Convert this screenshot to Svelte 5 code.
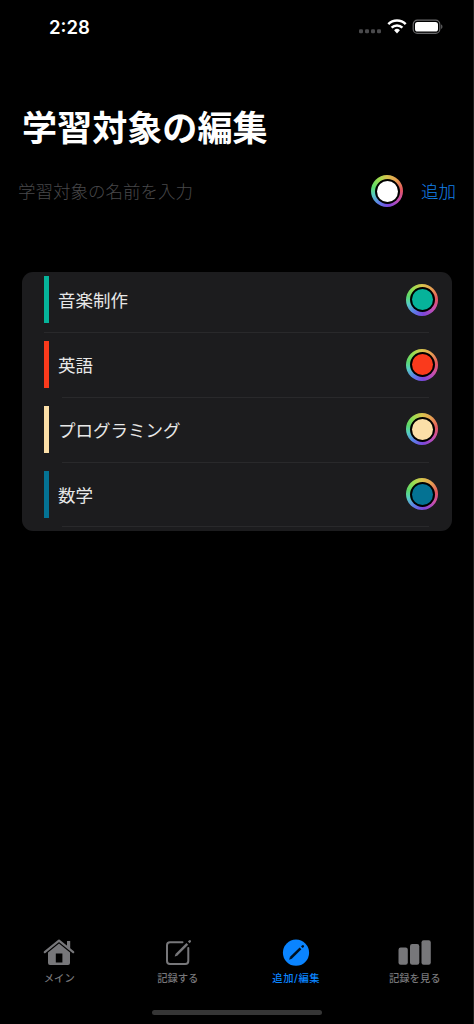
<script lang="ts">
    type Subject = { name: string; color: string };

    const subjects: Subject[] = [
        { name: '音楽制作', color: '#06b39a' },
        { name: '英語', color: '#fa3a1c' },
        { name: 'プログラミング', color: '#fbdfa8' },
        { name: '数学', color: '#047293' },
    ];

    const tabs = [
        { id: 'main', label: 'メイン' },
        { id: 'record', label: '記録する' },
        { id: 'edit', label: '追加/編集' },
        { id: 'stats', label: '記録を見る' },
    ];

    let active = $state('edit');
</script>

{#snippet colorWell(color: string)}
    <button type="button" class="well" aria-label="color">
        <span class="well-gap"><span class="well-fill" style="background: {color}"></span></span>
    </button>
{/snippet}

<div class="screen">
    <header class="status">
        <span class="time">2:28</span>
        <svg class="status-icons" width="86" height="18" viewBox="0 0 86 18">
            <g fill="#4a4a4c">
                <rect x="1" y="11.3" width="4" height="4" rx="1.2" />
                <rect x="7" y="11.3" width="4" height="4" rx="1.2" />
                <rect x="13" y="11.3" width="4" height="4" rx="1.2" />
                <rect x="19" y="11.3" width="4" height="4" rx="1.2" />
            </g>
            <g fill="none" stroke="#fff" stroke-width="2.5">
                <path d="M30.3 6.2a12.2 12.2 0 0 1 17.4 0" />
                <path d="M33.6 9.7a7.6 7.6 0 0 1 10.8 0" />
            </g>
            <path d="M36.1 12.2a4.2 4.2 0 0 1 5.8 0L39 15.4z" fill="#fff" />
            <rect x="55.2" y="2.2" width="26.6" height="13.2" rx="4.2" fill="none" stroke="#69696b" stroke-width="1.2" />
            <rect x="57" y="4" width="23" height="9.6" rx="2.6" fill="#fff" />
            <path d="M83.2 6.5v4.4c1.6-.6 1.6-3.8 0-4.4z" fill="#69696b" />
        </svg>
    </header>

    <h1>学習対象の編集</h1>

    <div class="add-row">
        <input type="text" placeholder="学習対象の名前を入力" />
        {@render colorWell('#ffffff')}
        <button type="button" class="add">追加</button>
    </div>

    <ul class="list">
        {#each subjects as subject, i}
            <li class:inset={i > 0}>
                <span class="bar" style="background: {subject.color}"></span>
                <span class="name">{subject.name}</span>
                {@render colorWell(subject.color)}
            </li>
        {/each}
    </ul>

    <nav>
        {#each tabs as tab}
            <button type="button" class="tab" class:active={active === tab.id} onclick={() => (active = tab.id)}>
                <svg width="36" height="28" viewBox="0 0 36 28">
                    {#if tab.id === 'main'}
                        <path d="M3.8 14.2 18 2.6l14.2 11.6" fill="none" stroke="currentColor" stroke-width="2.2" stroke-linecap="round" stroke-linejoin="round" />
                        <path d="M26 3h3.2v8l-3.2-2.6z" fill="currentColor" />
                        <path fill-rule="evenodd" d="M18 5.6 29 14.5V25q0 2-2 2H9q-2 0-2-2V14.5zM14.8 15.5v9h6.6v-9z" fill="currentColor" />
                    {:else if tab.id === 'record'}
                        <path d="M22.5 4.2H10a3 3 0 0 0-3 3V23a3 3 0 0 0 3 3h15.3a3 3 0 0 0 3-3V10" fill="none" stroke="currentColor" stroke-width="2" stroke-linecap="round" />
                        <path d="m16.3 16.9 11-11" stroke="currentColor" stroke-width="2.5" />
                        <path d="m14.7 18.6.8-2.7 1.9 1.9zM27.9 3.5l1.3-1.2q1-.6 1.6.2t0 1.5L29.5 5.2z" fill="currentColor" />
                    {:else if tab.id === 'edit'}
                        <circle cx="18" cy="14.7" r="13.1" fill="currentColor" />
                        <path d="m12.7 20 9.8-9.6" stroke="#00101f" stroke-width="2.5" />
                        <path d="m11.1 21.7.9-2.7 1.8 1.8zM23 8.4l1.2-1.1q1-.6 1.6.1t0 1.6l-1.1 1.1z" fill="#00101f" />
                    {:else}
                        <rect x="1.5" y="9.5" width="9.3" height="17.3" rx="2.2" fill="currentColor" />
                        <rect x="13" y="6" width="9.3" height="20.8" rx="2.2" fill="currentColor" />
                        <rect x="24.5" y="2.3" width="9.3" height="24.5" rx="2.2" fill="currentColor" />
                    {/if}
                </svg>
                <span>{tab.label}</span>
            </button>
        {/each}
    </nav>

    <div class="home-indicator"></div>
</div>

<style>
    :global(body) {
        background: #000;
    }

    .screen {
        box-sizing: border-box;
        width: 474px;
        height: 1024px;
        display: flex;
        flex-direction: column;
        background: #000;
        border-right: 1px solid #1d1d1d;
        color: #fff;
        font-family: Inter, "Noto Sans CJK JP", sans-serif;
        overflow: hidden;
    }

    button {
        border: none;
        padding: 0;
        background: none;
        font-family: inherit;
        cursor: pointer;
    }

    .status {
        display: flex;
        justify-content: space-between;
        align-items: center;
        height: 36px;
        padding: 9px 29px 0 49px;
    }

    .time {
        font-size: 18.5px;
        font-weight: 600;
    }

    h1 {
        margin: 58px 0 0 22px;
        font-size: 35.1px;
        line-height: 50px;
        font-weight: 700;
        white-space: nowrap;
    }

    .add-row {
        display: flex;
        align-items: center;
        height: 32px;
        margin-top: 22px;
        padding: 0 17px 1px 18px;
    }

    input {
        flex: 1;
        min-width: 0;
        padding: 2px 0 0;
        border: none;
        outline: none;
        background: transparent;
        color: #fff;
        font: 300 17.5px/28px Inter, "Noto Sans CJK JP", sans-serif;
    }

    input::placeholder {
        color: #48484a;
        opacity: 1;
    }

    .add {
        margin-left: 18px;
        padding-top: 2px;
        color: #1480ea;
        font-size: 17.5px;
        line-height: 28px;
        font-weight: 300;
    }

    /* rainbow ring around the chosen color */
    .well {
        flex: none;
        display: grid;
        place-items: center;
        width: 32px;
        height: 32px;
        border-radius: 50%;
        background: conic-gradient(
            #d8c34e, #e8a052 40deg, #e2555f 85deg, #c94fae 125deg,
            #7c46dc 175deg, #5c7de8 215deg, #55cfc0 255deg, #5bd96c 285deg,
            #9ddd50 325deg, #d8c34e
        );
    }

    .well-gap {
        display: grid;
        place-items: center;
        width: 25px;
        height: 25px;
        border-radius: 50%;
        background: #000;
    }

    .well-fill {
        width: 21px;
        height: 21px;
        border-radius: 50%;
    }

    .list {
        box-sizing: border-box;
        height: 259px;
        margin: 64px 21px 0 22px;
        padding: 0;
        border-radius: 11px;
        background: #1c1c1e;
        list-style: none;
        overflow: hidden;
    }

    li {
        display: flex;
        align-items: center;
        height: 64.75px;
        margin: 0 14px 0 22px;
        background: linear-gradient(#29292b, #29292b) 0 60px / calc(100% - 9px) 1px no-repeat;
    }

    li.inset {
        background-position: 18px 60px;
        background-size: calc(100% - 27px) 1px;
    }

    .bar {
        width: 5px;
        height: 47px;
        margin-top: -9px;
    }

    .name {
        flex: 1;
        margin: -6px 0 0 9px;
        color: #e8e8e8;
        font-size: 17.5px;
        line-height: 28px;
        font-weight: 400;
    }

    li .well {
        margin-top: -9px;
    }

    nav {
        display: flex;
        width: 474px;
        margin-top: auto;
    }

    .tab {
        flex: 1;
        display: flex;
        flex-direction: column;
        align-items: center;
        color: #77777a;
        font-size: 10.3px;
        line-height: 16px;
        font-weight: 500;
        white-space: nowrap;
    }

    .tab span {
        margin-top: 4px;
    }

    .active {
        color: #0a84ff;
        letter-spacing: 0.6px;
    }

    .home-indicator {
        width: 170px;
        height: 5px;
        margin: 24px 0 9px 152px;
        border-radius: 3px;
        background: #353535;
    }
</style>
